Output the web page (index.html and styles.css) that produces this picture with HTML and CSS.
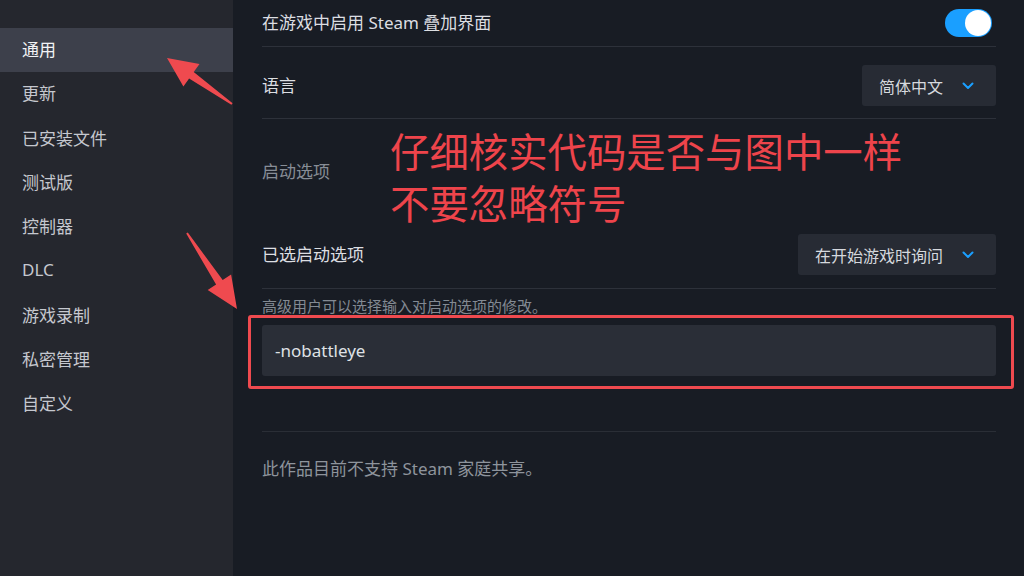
FILE: index.html
```html
<!DOCTYPE html>
<html lang="zh-CN">
<head>
<meta charset="utf-8">
<title>属性 - 通用</title>
<link rel="stylesheet" href="styles.css">
</head>
<body>
<div class="page">
  <nav class="sidebar">
    <div class="nav-item active">通用</div>
    <div class="nav-item">更新</div>
    <div class="nav-item">已安装文件</div>
    <div class="nav-item">测试版</div>
    <div class="nav-item">控制器</div>
    <div class="nav-item">DLC</div>
    <div class="nav-item">游戏录制</div>
    <div class="nav-item">私密管理</div>
    <div class="nav-item">自定义</div>
  </nav>
  <main class="content">
    <div class="row row-overlay">
      <span class="label">在游戏中启用 Steam 叠加界面</span>
      <span class="toggle"><span class="knob"></span></span>
    </div>
    <div class="row row-lang">
      <span class="label">语言</span>
      <div class="dropdown">
        <span>简体中文</span>
        <svg class="chev" width="12" height="8" viewBox="0 0 12 8"><polyline points="1.5,1.5 6,6 10.5,1.5" fill="none" stroke="#1a9fff" stroke-width="2" stroke-linecap="round" stroke-linejoin="round"/></svg>
      </div>
    </div>
    <div class="section-title">启动选项</div>
    <div class="row row-launch">
      <span class="label">已选启动选项</span>
      <div class="dropdown">
        <span>在开始游戏时询问</span>
        <svg class="chev" width="12" height="8" viewBox="0 0 12 8"><polyline points="1.5,1.5 6,6 10.5,1.5" fill="none" stroke="#1a9fff" stroke-width="2" stroke-linecap="round" stroke-linejoin="round"/></svg>
      </div>
    </div>
    <div class="hint">高级用户可以选择输入对启动选项的修改。</div>
    <div class="input">-nobattleye</div>
    <div class="divider"></div>
    <div class="footer-note">此作品目前不支持 Steam 家庭共享。</div>
  </main>

  <div class="annot-text">仔细核实代码是否与图中一样<br>不要忽略符号</div>
  <div class="annot-box"></div>
  <svg class="annot-arrows" width="1024" height="576" viewBox="0 0 1024 576">
    <polygon points="167,58 199.5,63.9 193.7,72 232.6,103.2 231.4,104.8 189.1,78.5 183.4,86.6" fill="#ef4a4f"/>
    <polygon points="237,309 207.7,290 216.1,284.5 186.2,233.5 187.8,232.5 222.7,280.1 231.1,274.6" fill="#ef4a4f"/>
  </svg>
</div>
</body>
</html>
```

FILE: styles.css
```css
html, body {
  margin: 0;
  padding: 0;
  width: 1024px;
  height: 576px;
  overflow: hidden;
  background: #181c24;
}

.page {
  position: relative;
  display: flex;
  width: 1024px;
  height: 576px;
  font-family: "Noto Sans", "Noto Sans CJK SC", sans-serif;
}

.sidebar {
  width: 233px;
  flex: none;
  background: #25272e;
  padding-top: 28px;
  box-sizing: border-box;
}

.nav-item {
  height: 44.25px;
  display: flex;
  align-items: center;
  padding-left: 22px;
  padding-bottom: 3px;
  box-sizing: border-box;
  font-size: 17px;
  color: #c5c8cf;
}

.nav-item.active {
  background: #3d404b;
  color: #f2f3f5;
}

.content {
  flex: 1;
  padding: 0 28px 0 29px;
  box-sizing: border-box;
  color: #dcdee2;
  font-size: 17px;
}

.row {
  display: flex;
  align-items: center;
  justify-content: space-between;
  border-bottom: 1px solid #2d313a;
}

.label {
  line-height: 24px;
}

.row-overlay {
  height: 47px;
  padding-bottom: 1px;
  box-sizing: border-box;
}

.toggle {
  width: 47px;
  height: 28px;
  border-radius: 14px;
  background: #1a9fff;
  margin-right: 4px;
  display: flex;
  align-items: center;
  justify-content: flex-end;
  padding: 0 1px;
  box-sizing: border-box;
}

.knob {
  width: 26px;
  height: 26px;
  border-radius: 50%;
  background: #ffffff;
}

.row-lang {
  padding: 18px 0 12px;
}

.dropdown {
  height: 41px;
  display: flex;
  align-items: center;
  gap: 19px;
  padding: 0 22px 0 17px;
  background: #272b34;
  border-radius: 3px;
  font-size: 16px;
  color: #d6d9de;
  box-sizing: border-box;
}

.chev {
  display: block;
}

.section-title {
  padding-top: 41px;
  line-height: 24px;
  color: #878d96;
}

.row-launch {
  padding: 50px 0 13px;
}

.hint {
  margin-top: 7px;
  font-size: 15px;
  line-height: 20px;
  color: #838a93;
}

.input {
  margin-top: 9px;
  height: 51px;
  display: flex;
  align-items: center;
  padding-left: 13px;
  background: #2a2e37;
  border-radius: 3px;
  color: #dfe1e5;
  font-size: 17px;
}

.divider {
  margin-top: 55px;
  border-top: 1px solid #2a2e36;
}

.footer-note {
  margin-top: 25px;
  line-height: 24px;
  color: #8e949c;
}

.annot-text {
  position: absolute;
  left: 390px;
  top: 124px;
  font-family: "Noto Sans CJK SC", sans-serif;
  font-size: 39.4px;
  line-height: 52px;
  color: #ee444b;
  white-space: nowrap;
}

.annot-box {
  position: absolute;
  left: 248px;
  top: 315px;
  width: 766px;
  height: 74px;
  border: 3.5px solid #ef4a4f;
  border-radius: 3px;
  box-sizing: border-box;
}

.annot-arrows {
  position: absolute;
  left: 0;
  top: 0;
  pointer-events: none;
}
```
